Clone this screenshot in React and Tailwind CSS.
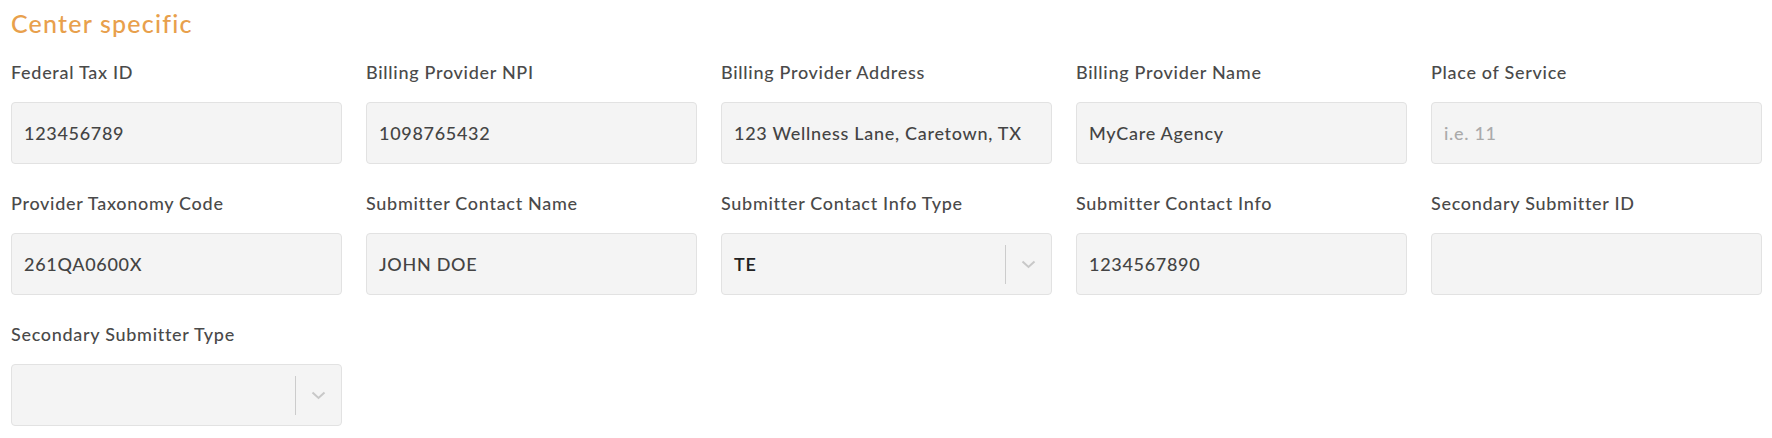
import React from "react";

const fields = [
  { label: "Federal Tax ID", value: "123456789" },
  { label: "Billing Provider NPI", value: "1098765432" },
  { label: "Billing Provider Address", value: "123 Wellness Lane, Caretown, TX" },
  { label: "Billing Provider Name", value: "MyCare Agency" },
  { label: "Place of Service", placeholder: "i.e. 11" },
  { label: "Provider Taxonomy Code", value: "261QA0600X" },
  { label: "Submitter Contact Name", value: "JOHN DOE" },
  { label: "Submitter Contact Info Type", value: "TE", select: true },
  { label: "Submitter Contact Info", value: "1234567890" },
  { label: "Secondary Submitter ID", value: "" },
  { label: "Secondary Submitter Type", value: "", select: true },
];

function Chevron() {
  return (
    <svg width="15" height="9" viewBox="0 0 15 9" fill="none">
      <path d="M1.5 1.5 L7.5 7 L13.5 1.5" stroke="#c8c8c8" strokeWidth="2" />
    </svg>
  );
}

function Field({ f }) {
  return (
    <div className="flex flex-col">
      <div className="text-[18px] leading-[24px] font-medium tracking-[0.7px] text-[#4a4a4a] mb-[18px] whitespace-nowrap">
        {f.label}
      </div>
      <div className="h-[62px] rounded-[4px] border border-[#e2e2e2] bg-[#f4f4f4] flex items-center">
        <div
          className={
            "flex-1 pl-[12px] text-[18px] leading-[24px] tracking-[0.7px] whitespace-nowrap " +
            (f.select ? "text-[#222222] font-semibold" : "text-[#444444] font-medium")
          }
        >
          {f.value ? f.value : <span className="text-[#aaaaaa]">{f.placeholder || ""}</span>}
        </div>
        {f.select && (
          <div className="flex items-center h-full">
            <div className="w-px h-[39px] bg-[#cccccc]" />
            <div className="w-[45px] flex items-center justify-center">
              <Chevron />
            </div>
          </div>
        )}
      </div>
    </div>
  );
}

export default function App() {
  return (
    <div
      className="bg-white w-[1772px] h-[438px] pt-[7px] pl-[11px] pr-[10px]"
      style={{ fontFamily: "Lato, 'Open Sans', sans-serif" }}
    >
      <h2 className="text-[25px] leading-[32px] tracking-[1.2px] text-[#e8a04c] font-medium mb-[21px]">
        Center specific
      </h2>
      <div className="grid grid-cols-5 gap-x-[24px] gap-y-[27px]">
        {fields.map((f) => (
          <Field key={f.label} f={f} />
        ))}
      </div>
    </div>
  );
}
